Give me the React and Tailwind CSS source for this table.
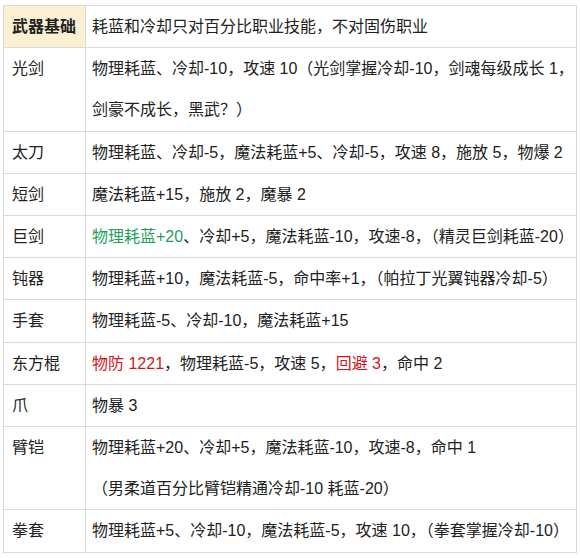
const rows = [
  { name: "光剑", lines: [["物理耗蓝、冷却-10，攻速 10（光剑掌握冷却-10，剑魂每级成长 1，"], ["剑豪不成长，黑武？）"]] },
  { name: "太刀", lines: [["物理耗蓝、冷却-5，魔法耗蓝+5、冷却-5，攻速 8，施放 5，物爆 2"]] },
  { name: "短剑", lines: [["魔法耗蓝+15，施放 2，魔暴 2"]] },
  { name: "巨剑", lines: [[{ t: "物理耗蓝+20", c: "green" }, "、冷却+5，魔法耗蓝-10，攻速-8，（精灵巨剑耗蓝-20）"]] },
  { name: "钝器", lines: [["物理耗蓝+10，魔法耗蓝-5，命中率+1，（帕拉丁光翼钝器冷却-5）"]] },
  { name: "手套", lines: [["物理耗蓝-5、冷却-10，魔法耗蓝+15"]] },
  { name: "东方棍", lines: [[{ t: "物防 1221", c: "red" }, "，物理耗蓝-5，攻速 5，", { t: "回避 3", c: "red" }, "，命中 2"]] },
  { name: "爪", lines: [["物暴 3"]] },
  { name: "臂铠", lines: [["物理耗蓝+20、冷却+5，魔法耗蓝-10，攻速-8，命中 1"], ["（男柔道百分比臂铠精通冷却-10 耗蓝-20）"]] },
  { name: "拳套", lines: [["物理耗蓝+5、冷却-10，魔法耗蓝-5，攻速 10，（拳套掌握冷却-10）"]] },
];

function Part({ p }) {
  if (typeof p === "string") return p;
  if (p.c === "green") return <span className="text-[#1e9f5b]">{p.t}</span>;
  return <span className="text-[#d3151c]">{p.t}</span>;
}

export default function App() {
  return (
    <div
      className="bg-white w-[580px] h-[558px] pt-[5px] pl-[3px] text-[16px] text-[#222]"
      style={{ fontFamily: '"Liberation Sans", "Noto Sans CJK SC", sans-serif' }}
    >
      <table className="w-[574px] table-fixed border-collapse leading-[41.2px]">
        <colgroup>
          <col className="w-[82px]" />
          <col />
        </colgroup>
        <tbody>
          <tr>
            <td className="border border-[#dadada] bg-[#fcf0d3] pl-2 p-0 font-bold whitespace-nowrap">武器基础</td>
            <td className="border border-[#dadada] pl-[6px] p-0 whitespace-nowrap">耗蓝和冷却只对百分比职业技能，不对固伤职业</td>
          </tr>
          {rows.map((r) => (
            <tr key={r.name}>
              <td className="border border-[#dadada] pl-2 p-0 align-top whitespace-nowrap">{r.name}</td>
              <td className="border border-[#dadada] pl-[6px] p-0 whitespace-nowrap">
                {r.lines.map((line, i) => (
                  <div key={i}>
                    {line.map((p, j) => (
                      <Part key={j} p={p} />
                    ))}
                  </div>
                ))}
              </td>
            </tr>
          ))}
        </tbody>
      </table>
    </div>
  );
}
